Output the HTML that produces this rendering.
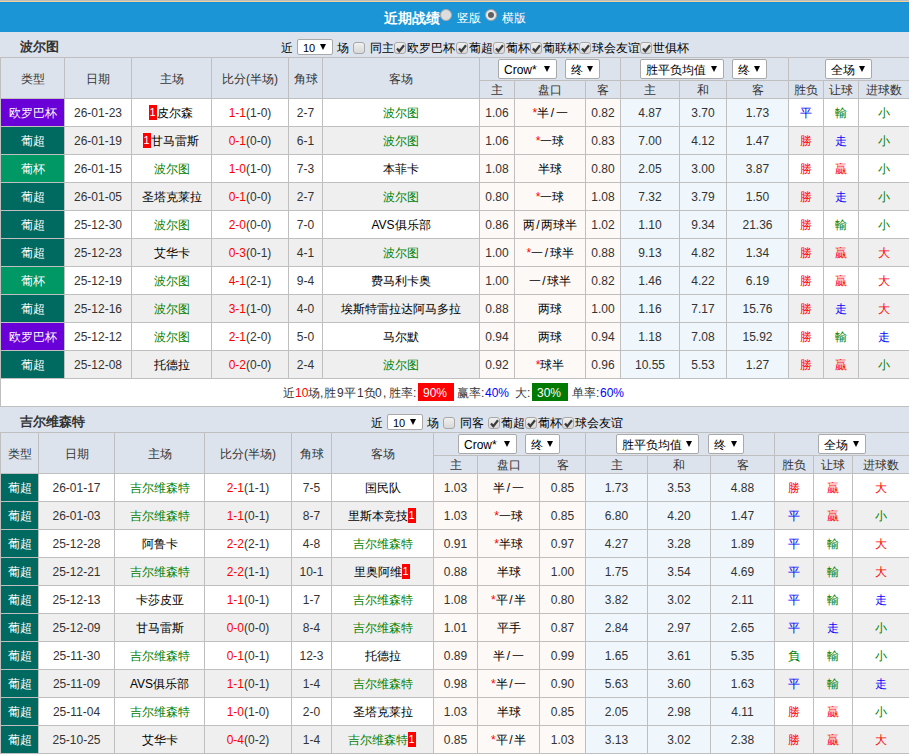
<!DOCTYPE html>
<html><head><meta charset="utf-8"><style>
html,body{margin:0;padding:0;}
body{width:909px;height:755px;overflow:hidden;position:relative;background:#fff;font-family:"Liberation Sans",sans-serif;font-size:12px;color:#333;}
body>div{position:absolute;box-sizing:border-box;white-space:nowrap;}
.t{position:absolute;white-space:nowrap;}
.sl{font-weight:normal;padding:0 1.5px;}
.one{display:inline-block;background:#f00;color:#fff;font-weight:normal;width:8px;height:15px;line-height:15px;text-align:center;font-size:11px;vertical-align:middle;position:relative;top:-1px;}
.box{display:inline-block;color:#fff;padding:0 4px;line-height:18px;}
.sel{background:#fff;border:1px solid #a9a9a9;border-radius:2px;text-align:left;padding:0 0 0 5px;color:#000;}
.arr{position:absolute;right:6px;top:50%;margin-top:-3px;width:0;height:0;border-left:3px solid transparent;border-right:3px solid transparent;border-top:6px solid #000;}
.cb{width:12px;height:12px;border:1px solid #a8a8a8;border-radius:3px;background:linear-gradient(#f0f0f0,#d8d8d8);box-sizing:border-box;}
.cb svg{position:absolute;left:0;top:0;}
.cb span{position:absolute;left:1px;top:-2px;font-size:10px;color:#333;}
.radio{width:12px;height:12px;border-radius:50%;background:#ddd;border:1px solid #aaa;box-sizing:border-box;}
.radio i{position:absolute;left:2px;top:2px;width:6px;height:6px;border-radius:50%;background:#606060;}
.radio.on{background:#e8e8e8;border-color:#a0a0a0;}
</style></head><body>
<div style="left:0px;top:0px;width:909px;height:1px;background:#bdbdc1"></div>
<div style="left:0px;top:1px;width:909px;height:1px;background:#f3d39a"></div>
<div style="left:0px;top:2px;width:909px;height:1px;background:#0e8fd9"></div>
<div style="left:0px;top:3px;width:909px;height:29px;background:#1c95d6"></div>
<div class="t" style="left:384px;top:9px;font-size:14px;font-weight:bold;color:#fff;line-height:18px">近期战绩</div>
<div class="radio" style="left:440px;top:9px"></div>
<div class="t" style="left:457px;top:10px;font-size:12px;color:#fff;line-height:16px">竖版</div>
<div class="radio on" style="left:485px;top:9px"><i></i></div>
<div class="t" style="left:502px;top:10px;font-size:12px;color:#fff;line-height:16px">横版</div>
<div style="left:0px;top:32px;width:909px;height:25px;background:#dde3ec"></div>
<div class="t" style="left:20px;top:38px;font-size:13px;font-weight:bold;color:#333;line-height:18px">波尔图</div>
<div style="left:0px;top:57px;width:909px;height:41px;background:#dde3ec"></div>
<div style="left:1px;top:58px;width:63px;height:40px;line-height:40px;padding-top:1px;text-align:center;color:#333">类型</div>
<div style="left:65px;top:58px;width:66px;height:40px;line-height:40px;padding-top:1px;text-align:center;color:#333">日期</div>
<div style="left:132px;top:58px;width:79px;height:40px;line-height:40px;padding-top:1px;text-align:center;color:#333">主场</div>
<div style="left:212px;top:58px;width:76px;height:40px;line-height:40px;padding-top:1px;text-align:center;color:#333">比分(半场)</div>
<div style="left:289px;top:58px;width:33px;height:40px;line-height:40px;padding-top:1px;text-align:center;color:#333">角球</div>
<div style="left:323px;top:58px;width:156px;height:40px;line-height:40px;padding-top:1px;text-align:center;color:#333">客场</div>
<div style="left:480px;top:81px;width:34px;height:17px;line-height:17px;padding-top:1px;text-align:center;color:#333">主</div>
<div style="left:515px;top:81px;width:70px;height:17px;line-height:17px;padding-top:1px;text-align:center;color:#333">盘口</div>
<div style="left:586px;top:81px;width:34px;height:17px;line-height:17px;padding-top:1px;text-align:center;color:#333">客</div>
<div style="left:621px;top:81px;width:58px;height:17px;line-height:17px;padding-top:1px;text-align:center;color:#333">主</div>
<div style="left:680px;top:81px;width:46px;height:17px;line-height:17px;padding-top:1px;text-align:center;color:#333">和</div>
<div style="left:727px;top:81px;width:61px;height:17px;line-height:17px;padding-top:1px;text-align:center;color:#333">客</div>
<div style="left:789px;top:81px;width:34px;height:17px;line-height:17px;padding-top:1px;text-align:center;color:#333">胜负</div>
<div style="left:824px;top:81px;width:34px;height:17px;line-height:17px;padding-top:1px;text-align:center;color:#333">让球</div>
<div style="left:859px;top:81px;width:50px;height:17px;line-height:17px;padding-top:1px;text-align:center;color:#333">进球数</div>
<div style="left:1px;top:99px;width:908px;height:27px;background:#ffffff"></div>
<div style="left:1px;top:99px;width:63px;height:27px;background:#6a00d8;line-height:27px;padding-top:1px;text-align:center;color:#fff">欧罗巴杯</div>
<div style="left:65px;top:99px;width:66px;height:27px;line-height:27px;padding-top:1px;text-align:center;color:#333">26-01-23</div>
<div style="left:132px;top:99px;width:79px;height:27px;line-height:27px;padding-top:1px;text-align:center;color:#000"><span style="position:relative;left:-1px"><b class="one">1</b>皮尔森</span></div>
<div style="left:212px;top:99px;width:76px;height:27px;line-height:27px;padding-top:1px;text-align:center;color:#333"><span style="color:#ff0000">1-1</span>(1-0)</div>
<div style="left:289px;top:99px;width:33px;height:27px;line-height:27px;padding-top:1px;text-align:center;color:#333">2-7</div>
<div style="left:323px;top:99px;width:156px;height:27px;line-height:27px;padding-top:1px;text-align:center;color:#008000">波尔图</div>
<div style="left:480px;top:99px;width:34px;height:27px;background:#fdf9f6;line-height:27px;padding-top:1px;text-align:center;color:#333">1.06</div>
<div style="left:515px;top:99px;width:70px;height:27px;background:#fdf9f6;line-height:27px;padding-top:1px;text-align:center;color:#000"><span style="color:#ff0000">*</span>半<b class="sl">/</b>一</div>
<div style="left:586px;top:99px;width:34px;height:27px;background:#fdf9f6;line-height:27px;padding-top:1px;text-align:center;color:#333">0.82</div>
<div style="left:621px;top:99px;width:58px;height:27px;background:#eff7fc;line-height:27px;padding-top:1px;text-align:center;color:#333">4.87</div>
<div style="left:680px;top:99px;width:46px;height:27px;background:#eff7fc;line-height:27px;padding-top:1px;text-align:center;color:#333">3.70</div>
<div style="left:727px;top:99px;width:61px;height:27px;background:#eff7fc;line-height:27px;padding-top:1px;text-align:center;color:#333">1.73</div>
<div style="left:789px;top:99px;width:34px;height:27px;line-height:27px;padding-top:1px;text-align:center;color:#0000ff">平</div>
<div style="left:824px;top:99px;width:34px;height:27px;line-height:27px;padding-top:1px;text-align:center;color:#008000">輸</div>
<div style="left:859px;top:99px;width:50px;height:27px;line-height:27px;padding-top:1px;text-align:center;color:#008000">小</div>
<div style="left:1px;top:127px;width:908px;height:27px;background:#efefef"></div>
<div style="left:1px;top:127px;width:63px;height:27px;background:#006a60;line-height:27px;padding-top:1px;text-align:center;color:#fff">葡超</div>
<div style="left:65px;top:127px;width:66px;height:27px;line-height:27px;padding-top:1px;text-align:center;color:#333">26-01-19</div>
<div style="left:132px;top:127px;width:79px;height:27px;line-height:27px;padding-top:1px;text-align:center;color:#000"><span style="position:relative;left:-1px"><b class="one">1</b>甘马雷斯</span></div>
<div style="left:212px;top:127px;width:76px;height:27px;line-height:27px;padding-top:1px;text-align:center;color:#333"><span style="color:#ff0000">0-1</span>(0-0)</div>
<div style="left:289px;top:127px;width:33px;height:27px;line-height:27px;padding-top:1px;text-align:center;color:#333">6-1</div>
<div style="left:323px;top:127px;width:156px;height:27px;line-height:27px;padding-top:1px;text-align:center;color:#008000">波尔图</div>
<div style="left:480px;top:127px;width:34px;height:27px;background:#fdf9f6;line-height:27px;padding-top:1px;text-align:center;color:#333">1.06</div>
<div style="left:515px;top:127px;width:70px;height:27px;background:#fdf9f6;line-height:27px;padding-top:1px;text-align:center;color:#000"><span style="color:#ff0000">*</span>一球</div>
<div style="left:586px;top:127px;width:34px;height:27px;background:#fdf9f6;line-height:27px;padding-top:1px;text-align:center;color:#333">0.83</div>
<div style="left:621px;top:127px;width:58px;height:27px;background:#eff7fc;line-height:27px;padding-top:1px;text-align:center;color:#333">7.00</div>
<div style="left:680px;top:127px;width:46px;height:27px;background:#eff7fc;line-height:27px;padding-top:1px;text-align:center;color:#333">4.12</div>
<div style="left:727px;top:127px;width:61px;height:27px;background:#eff7fc;line-height:27px;padding-top:1px;text-align:center;color:#333">1.47</div>
<div style="left:789px;top:127px;width:34px;height:27px;line-height:27px;padding-top:1px;text-align:center;color:#ff0000">勝</div>
<div style="left:824px;top:127px;width:34px;height:27px;line-height:27px;padding-top:1px;text-align:center;color:#0000ff">走</div>
<div style="left:859px;top:127px;width:50px;height:27px;line-height:27px;padding-top:1px;text-align:center;color:#008000">小</div>
<div style="left:1px;top:155px;width:908px;height:27px;background:#ffffff"></div>
<div style="left:1px;top:155px;width:63px;height:27px;background:#009865;line-height:27px;padding-top:1px;text-align:center;color:#fff">葡杯</div>
<div style="left:65px;top:155px;width:66px;height:27px;line-height:27px;padding-top:1px;text-align:center;color:#333">26-01-15</div>
<div style="left:132px;top:155px;width:79px;height:27px;line-height:27px;padding-top:1px;text-align:center;color:#008000">波尔图</div>
<div style="left:212px;top:155px;width:76px;height:27px;line-height:27px;padding-top:1px;text-align:center;color:#333"><span style="color:#ff0000">1-0</span>(1-0)</div>
<div style="left:289px;top:155px;width:33px;height:27px;line-height:27px;padding-top:1px;text-align:center;color:#333">7-3</div>
<div style="left:323px;top:155px;width:156px;height:27px;line-height:27px;padding-top:1px;text-align:center;color:#000">本菲卡</div>
<div style="left:480px;top:155px;width:34px;height:27px;background:#fdf9f6;line-height:27px;padding-top:1px;text-align:center;color:#333">1.08</div>
<div style="left:515px;top:155px;width:70px;height:27px;background:#fdf9f6;line-height:27px;padding-top:1px;text-align:center;color:#000">半球</div>
<div style="left:586px;top:155px;width:34px;height:27px;background:#fdf9f6;line-height:27px;padding-top:1px;text-align:center;color:#333">0.80</div>
<div style="left:621px;top:155px;width:58px;height:27px;background:#eff7fc;line-height:27px;padding-top:1px;text-align:center;color:#333">2.05</div>
<div style="left:680px;top:155px;width:46px;height:27px;background:#eff7fc;line-height:27px;padding-top:1px;text-align:center;color:#333">3.00</div>
<div style="left:727px;top:155px;width:61px;height:27px;background:#eff7fc;line-height:27px;padding-top:1px;text-align:center;color:#333">3.87</div>
<div style="left:789px;top:155px;width:34px;height:27px;line-height:27px;padding-top:1px;text-align:center;color:#ff0000">勝</div>
<div style="left:824px;top:155px;width:34px;height:27px;line-height:27px;padding-top:1px;text-align:center;color:#ff0000">贏</div>
<div style="left:859px;top:155px;width:50px;height:27px;line-height:27px;padding-top:1px;text-align:center;color:#008000">小</div>
<div style="left:1px;top:183px;width:908px;height:27px;background:#efefef"></div>
<div style="left:1px;top:183px;width:63px;height:27px;background:#006a60;line-height:27px;padding-top:1px;text-align:center;color:#fff">葡超</div>
<div style="left:65px;top:183px;width:66px;height:27px;line-height:27px;padding-top:1px;text-align:center;color:#333">26-01-05</div>
<div style="left:132px;top:183px;width:79px;height:27px;line-height:27px;padding-top:1px;text-align:center;color:#000">圣塔克莱拉</div>
<div style="left:212px;top:183px;width:76px;height:27px;line-height:27px;padding-top:1px;text-align:center;color:#333"><span style="color:#ff0000">0-1</span>(0-0)</div>
<div style="left:289px;top:183px;width:33px;height:27px;line-height:27px;padding-top:1px;text-align:center;color:#333">2-7</div>
<div style="left:323px;top:183px;width:156px;height:27px;line-height:27px;padding-top:1px;text-align:center;color:#008000">波尔图</div>
<div style="left:480px;top:183px;width:34px;height:27px;background:#fdf9f6;line-height:27px;padding-top:1px;text-align:center;color:#333">0.80</div>
<div style="left:515px;top:183px;width:70px;height:27px;background:#fdf9f6;line-height:27px;padding-top:1px;text-align:center;color:#000"><span style="color:#ff0000">*</span>一球</div>
<div style="left:586px;top:183px;width:34px;height:27px;background:#fdf9f6;line-height:27px;padding-top:1px;text-align:center;color:#333">1.08</div>
<div style="left:621px;top:183px;width:58px;height:27px;background:#eff7fc;line-height:27px;padding-top:1px;text-align:center;color:#333">7.32</div>
<div style="left:680px;top:183px;width:46px;height:27px;background:#eff7fc;line-height:27px;padding-top:1px;text-align:center;color:#333">3.79</div>
<div style="left:727px;top:183px;width:61px;height:27px;background:#eff7fc;line-height:27px;padding-top:1px;text-align:center;color:#333">1.50</div>
<div style="left:789px;top:183px;width:34px;height:27px;line-height:27px;padding-top:1px;text-align:center;color:#ff0000">勝</div>
<div style="left:824px;top:183px;width:34px;height:27px;line-height:27px;padding-top:1px;text-align:center;color:#0000ff">走</div>
<div style="left:859px;top:183px;width:50px;height:27px;line-height:27px;padding-top:1px;text-align:center;color:#008000">小</div>
<div style="left:1px;top:211px;width:908px;height:27px;background:#ffffff"></div>
<div style="left:1px;top:211px;width:63px;height:27px;background:#006a60;line-height:27px;padding-top:1px;text-align:center;color:#fff">葡超</div>
<div style="left:65px;top:211px;width:66px;height:27px;line-height:27px;padding-top:1px;text-align:center;color:#333">25-12-30</div>
<div style="left:132px;top:211px;width:79px;height:27px;line-height:27px;padding-top:1px;text-align:center;color:#008000">波尔图</div>
<div style="left:212px;top:211px;width:76px;height:27px;line-height:27px;padding-top:1px;text-align:center;color:#333"><span style="color:#ff0000">2-0</span>(0-0)</div>
<div style="left:289px;top:211px;width:33px;height:27px;line-height:27px;padding-top:1px;text-align:center;color:#333">7-0</div>
<div style="left:323px;top:211px;width:156px;height:27px;line-height:27px;padding-top:1px;text-align:center;color:#000">AVS俱乐部</div>
<div style="left:480px;top:211px;width:34px;height:27px;background:#fdf9f6;line-height:27px;padding-top:1px;text-align:center;color:#333">0.86</div>
<div style="left:515px;top:211px;width:70px;height:27px;background:#fdf9f6;line-height:27px;padding-top:1px;text-align:center;color:#000">两<b class="sl">/</b>两球半</div>
<div style="left:586px;top:211px;width:34px;height:27px;background:#fdf9f6;line-height:27px;padding-top:1px;text-align:center;color:#333">1.02</div>
<div style="left:621px;top:211px;width:58px;height:27px;background:#eff7fc;line-height:27px;padding-top:1px;text-align:center;color:#333">1.10</div>
<div style="left:680px;top:211px;width:46px;height:27px;background:#eff7fc;line-height:27px;padding-top:1px;text-align:center;color:#333">9.34</div>
<div style="left:727px;top:211px;width:61px;height:27px;background:#eff7fc;line-height:27px;padding-top:1px;text-align:center;color:#333">21.36</div>
<div style="left:789px;top:211px;width:34px;height:27px;line-height:27px;padding-top:1px;text-align:center;color:#ff0000">勝</div>
<div style="left:824px;top:211px;width:34px;height:27px;line-height:27px;padding-top:1px;text-align:center;color:#008000">輸</div>
<div style="left:859px;top:211px;width:50px;height:27px;line-height:27px;padding-top:1px;text-align:center;color:#008000">小</div>
<div style="left:1px;top:239px;width:908px;height:27px;background:#efefef"></div>
<div style="left:1px;top:239px;width:63px;height:27px;background:#006a60;line-height:27px;padding-top:1px;text-align:center;color:#fff">葡超</div>
<div style="left:65px;top:239px;width:66px;height:27px;line-height:27px;padding-top:1px;text-align:center;color:#333">25-12-23</div>
<div style="left:132px;top:239px;width:79px;height:27px;line-height:27px;padding-top:1px;text-align:center;color:#000">艾华卡</div>
<div style="left:212px;top:239px;width:76px;height:27px;line-height:27px;padding-top:1px;text-align:center;color:#333"><span style="color:#ff0000">0-3</span>(0-1)</div>
<div style="left:289px;top:239px;width:33px;height:27px;line-height:27px;padding-top:1px;text-align:center;color:#333">4-1</div>
<div style="left:323px;top:239px;width:156px;height:27px;line-height:27px;padding-top:1px;text-align:center;color:#008000">波尔图</div>
<div style="left:480px;top:239px;width:34px;height:27px;background:#fdf9f6;line-height:27px;padding-top:1px;text-align:center;color:#333">1.00</div>
<div style="left:515px;top:239px;width:70px;height:27px;background:#fdf9f6;line-height:27px;padding-top:1px;text-align:center;color:#000"><span style="color:#ff0000">*</span>一<b class="sl">/</b>球半</div>
<div style="left:586px;top:239px;width:34px;height:27px;background:#fdf9f6;line-height:27px;padding-top:1px;text-align:center;color:#333">0.88</div>
<div style="left:621px;top:239px;width:58px;height:27px;background:#eff7fc;line-height:27px;padding-top:1px;text-align:center;color:#333">9.13</div>
<div style="left:680px;top:239px;width:46px;height:27px;background:#eff7fc;line-height:27px;padding-top:1px;text-align:center;color:#333">4.82</div>
<div style="left:727px;top:239px;width:61px;height:27px;background:#eff7fc;line-height:27px;padding-top:1px;text-align:center;color:#333">1.34</div>
<div style="left:789px;top:239px;width:34px;height:27px;line-height:27px;padding-top:1px;text-align:center;color:#ff0000">勝</div>
<div style="left:824px;top:239px;width:34px;height:27px;line-height:27px;padding-top:1px;text-align:center;color:#ff0000">贏</div>
<div style="left:859px;top:239px;width:50px;height:27px;line-height:27px;padding-top:1px;text-align:center;color:#ff0000">大</div>
<div style="left:1px;top:267px;width:908px;height:27px;background:#ffffff"></div>
<div style="left:1px;top:267px;width:63px;height:27px;background:#009865;line-height:27px;padding-top:1px;text-align:center;color:#fff">葡杯</div>
<div style="left:65px;top:267px;width:66px;height:27px;line-height:27px;padding-top:1px;text-align:center;color:#333">25-12-19</div>
<div style="left:132px;top:267px;width:79px;height:27px;line-height:27px;padding-top:1px;text-align:center;color:#008000">波尔图</div>
<div style="left:212px;top:267px;width:76px;height:27px;line-height:27px;padding-top:1px;text-align:center;color:#333"><span style="color:#ff0000">4-1</span>(2-1)</div>
<div style="left:289px;top:267px;width:33px;height:27px;line-height:27px;padding-top:1px;text-align:center;color:#333">9-4</div>
<div style="left:323px;top:267px;width:156px;height:27px;line-height:27px;padding-top:1px;text-align:center;color:#000">费马利卡奥</div>
<div style="left:480px;top:267px;width:34px;height:27px;background:#fdf9f6;line-height:27px;padding-top:1px;text-align:center;color:#333">1.00</div>
<div style="left:515px;top:267px;width:70px;height:27px;background:#fdf9f6;line-height:27px;padding-top:1px;text-align:center;color:#000">一<b class="sl">/</b>球半</div>
<div style="left:586px;top:267px;width:34px;height:27px;background:#fdf9f6;line-height:27px;padding-top:1px;text-align:center;color:#333">0.82</div>
<div style="left:621px;top:267px;width:58px;height:27px;background:#eff7fc;line-height:27px;padding-top:1px;text-align:center;color:#333">1.46</div>
<div style="left:680px;top:267px;width:46px;height:27px;background:#eff7fc;line-height:27px;padding-top:1px;text-align:center;color:#333">4.22</div>
<div style="left:727px;top:267px;width:61px;height:27px;background:#eff7fc;line-height:27px;padding-top:1px;text-align:center;color:#333">6.19</div>
<div style="left:789px;top:267px;width:34px;height:27px;line-height:27px;padding-top:1px;text-align:center;color:#ff0000">勝</div>
<div style="left:824px;top:267px;width:34px;height:27px;line-height:27px;padding-top:1px;text-align:center;color:#ff0000">贏</div>
<div style="left:859px;top:267px;width:50px;height:27px;line-height:27px;padding-top:1px;text-align:center;color:#ff0000">大</div>
<div style="left:1px;top:295px;width:908px;height:27px;background:#efefef"></div>
<div style="left:1px;top:295px;width:63px;height:27px;background:#006a60;line-height:27px;padding-top:1px;text-align:center;color:#fff">葡超</div>
<div style="left:65px;top:295px;width:66px;height:27px;line-height:27px;padding-top:1px;text-align:center;color:#333">25-12-16</div>
<div style="left:132px;top:295px;width:79px;height:27px;line-height:27px;padding-top:1px;text-align:center;color:#008000">波尔图</div>
<div style="left:212px;top:295px;width:76px;height:27px;line-height:27px;padding-top:1px;text-align:center;color:#333"><span style="color:#ff0000">3-1</span>(1-0)</div>
<div style="left:289px;top:295px;width:33px;height:27px;line-height:27px;padding-top:1px;text-align:center;color:#333">4-0</div>
<div style="left:323px;top:295px;width:156px;height:27px;line-height:27px;padding-top:1px;text-align:center;color:#000">埃斯特雷拉达阿马多拉</div>
<div style="left:480px;top:295px;width:34px;height:27px;background:#fdf9f6;line-height:27px;padding-top:1px;text-align:center;color:#333">0.88</div>
<div style="left:515px;top:295px;width:70px;height:27px;background:#fdf9f6;line-height:27px;padding-top:1px;text-align:center;color:#000">两球</div>
<div style="left:586px;top:295px;width:34px;height:27px;background:#fdf9f6;line-height:27px;padding-top:1px;text-align:center;color:#333">1.00</div>
<div style="left:621px;top:295px;width:58px;height:27px;background:#eff7fc;line-height:27px;padding-top:1px;text-align:center;color:#333">1.16</div>
<div style="left:680px;top:295px;width:46px;height:27px;background:#eff7fc;line-height:27px;padding-top:1px;text-align:center;color:#333">7.17</div>
<div style="left:727px;top:295px;width:61px;height:27px;background:#eff7fc;line-height:27px;padding-top:1px;text-align:center;color:#333">15.76</div>
<div style="left:789px;top:295px;width:34px;height:27px;line-height:27px;padding-top:1px;text-align:center;color:#ff0000">勝</div>
<div style="left:824px;top:295px;width:34px;height:27px;line-height:27px;padding-top:1px;text-align:center;color:#0000ff">走</div>
<div style="left:859px;top:295px;width:50px;height:27px;line-height:27px;padding-top:1px;text-align:center;color:#ff0000">大</div>
<div style="left:1px;top:323px;width:908px;height:27px;background:#ffffff"></div>
<div style="left:1px;top:323px;width:63px;height:27px;background:#6a00d8;line-height:27px;padding-top:1px;text-align:center;color:#fff">欧罗巴杯</div>
<div style="left:65px;top:323px;width:66px;height:27px;line-height:27px;padding-top:1px;text-align:center;color:#333">25-12-12</div>
<div style="left:132px;top:323px;width:79px;height:27px;line-height:27px;padding-top:1px;text-align:center;color:#008000">波尔图</div>
<div style="left:212px;top:323px;width:76px;height:27px;line-height:27px;padding-top:1px;text-align:center;color:#333"><span style="color:#ff0000">2-1</span>(2-0)</div>
<div style="left:289px;top:323px;width:33px;height:27px;line-height:27px;padding-top:1px;text-align:center;color:#333">5-0</div>
<div style="left:323px;top:323px;width:156px;height:27px;line-height:27px;padding-top:1px;text-align:center;color:#000">马尔默</div>
<div style="left:480px;top:323px;width:34px;height:27px;background:#fdf9f6;line-height:27px;padding-top:1px;text-align:center;color:#333">0.94</div>
<div style="left:515px;top:323px;width:70px;height:27px;background:#fdf9f6;line-height:27px;padding-top:1px;text-align:center;color:#000">两球</div>
<div style="left:586px;top:323px;width:34px;height:27px;background:#fdf9f6;line-height:27px;padding-top:1px;text-align:center;color:#333">0.94</div>
<div style="left:621px;top:323px;width:58px;height:27px;background:#eff7fc;line-height:27px;padding-top:1px;text-align:center;color:#333">1.18</div>
<div style="left:680px;top:323px;width:46px;height:27px;background:#eff7fc;line-height:27px;padding-top:1px;text-align:center;color:#333">7.08</div>
<div style="left:727px;top:323px;width:61px;height:27px;background:#eff7fc;line-height:27px;padding-top:1px;text-align:center;color:#333">15.92</div>
<div style="left:789px;top:323px;width:34px;height:27px;line-height:27px;padding-top:1px;text-align:center;color:#ff0000">勝</div>
<div style="left:824px;top:323px;width:34px;height:27px;line-height:27px;padding-top:1px;text-align:center;color:#008000">輸</div>
<div style="left:859px;top:323px;width:50px;height:27px;line-height:27px;padding-top:1px;text-align:center;color:#0000ff">走</div>
<div style="left:1px;top:351px;width:908px;height:27px;background:#efefef"></div>
<div style="left:1px;top:351px;width:63px;height:27px;background:#006a60;line-height:27px;padding-top:1px;text-align:center;color:#fff">葡超</div>
<div style="left:65px;top:351px;width:66px;height:27px;line-height:27px;padding-top:1px;text-align:center;color:#333">25-12-08</div>
<div style="left:132px;top:351px;width:79px;height:27px;line-height:27px;padding-top:1px;text-align:center;color:#000">托德拉</div>
<div style="left:212px;top:351px;width:76px;height:27px;line-height:27px;padding-top:1px;text-align:center;color:#333"><span style="color:#ff0000">0-2</span>(0-0)</div>
<div style="left:289px;top:351px;width:33px;height:27px;line-height:27px;padding-top:1px;text-align:center;color:#333">2-4</div>
<div style="left:323px;top:351px;width:156px;height:27px;line-height:27px;padding-top:1px;text-align:center;color:#008000">波尔图</div>
<div style="left:480px;top:351px;width:34px;height:27px;background:#fdf9f6;line-height:27px;padding-top:1px;text-align:center;color:#333">0.92</div>
<div style="left:515px;top:351px;width:70px;height:27px;background:#fdf9f6;line-height:27px;padding-top:1px;text-align:center;color:#000"><span style="color:#ff0000">*</span>球半</div>
<div style="left:586px;top:351px;width:34px;height:27px;background:#fdf9f6;line-height:27px;padding-top:1px;text-align:center;color:#333">0.96</div>
<div style="left:621px;top:351px;width:58px;height:27px;background:#eff7fc;line-height:27px;padding-top:1px;text-align:center;color:#333">10.55</div>
<div style="left:680px;top:351px;width:46px;height:27px;background:#eff7fc;line-height:27px;padding-top:1px;text-align:center;color:#333">5.53</div>
<div style="left:727px;top:351px;width:61px;height:27px;background:#eff7fc;line-height:27px;padding-top:1px;text-align:center;color:#333">1.27</div>
<div style="left:789px;top:351px;width:34px;height:27px;line-height:27px;padding-top:1px;text-align:center;color:#ff0000">勝</div>
<div style="left:824px;top:351px;width:34px;height:27px;line-height:27px;padding-top:1px;text-align:center;color:#ff0000">贏</div>
<div style="left:859px;top:351px;width:50px;height:27px;line-height:27px;padding-top:1px;text-align:center;color:#008000">小</div>
<div style="left:0px;top:57px;width:909px;height:1px;background:#bfbfbf"></div>
<div style="left:479px;top:80px;width:430px;height:1px;background:#bfbfbf"></div>
<div style="left:0px;top:98px;width:909px;height:1px;background:#bfbfbf"></div>
<div style="left:0px;top:126px;width:909px;height:1px;background:#bfbfbf"></div>
<div style="left:0px;top:154px;width:909px;height:1px;background:#bfbfbf"></div>
<div style="left:0px;top:182px;width:909px;height:1px;background:#bfbfbf"></div>
<div style="left:0px;top:210px;width:909px;height:1px;background:#bfbfbf"></div>
<div style="left:0px;top:238px;width:909px;height:1px;background:#bfbfbf"></div>
<div style="left:0px;top:266px;width:909px;height:1px;background:#bfbfbf"></div>
<div style="left:0px;top:294px;width:909px;height:1px;background:#bfbfbf"></div>
<div style="left:0px;top:322px;width:909px;height:1px;background:#bfbfbf"></div>
<div style="left:0px;top:350px;width:909px;height:1px;background:#bfbfbf"></div>
<div style="left:0px;top:378px;width:909px;height:1px;background:#bfbfbf"></div>
<div style="left:0px;top:57px;width:1px;height:321px;background:#bfbfbf"></div>
<div style="left:64px;top:57px;width:1px;height:321px;background:#bfbfbf"></div>
<div style="left:131px;top:57px;width:1px;height:321px;background:#bfbfbf"></div>
<div style="left:211px;top:57px;width:1px;height:321px;background:#bfbfbf"></div>
<div style="left:288px;top:57px;width:1px;height:321px;background:#bfbfbf"></div>
<div style="left:322px;top:57px;width:1px;height:321px;background:#bfbfbf"></div>
<div style="left:479px;top:57px;width:1px;height:321px;background:#bfbfbf"></div>
<div style="left:514px;top:80px;width:1px;height:298px;background:#bfbfbf"></div>
<div style="left:585px;top:80px;width:1px;height:298px;background:#bfbfbf"></div>
<div style="left:620px;top:57px;width:1px;height:321px;background:#bfbfbf"></div>
<div style="left:679px;top:80px;width:1px;height:298px;background:#bfbfbf"></div>
<div style="left:726px;top:80px;width:1px;height:298px;background:#bfbfbf"></div>
<div style="left:788px;top:57px;width:1px;height:321px;background:#bfbfbf"></div>
<div style="left:823px;top:80px;width:1px;height:298px;background:#bfbfbf"></div>
<div style="left:858px;top:80px;width:1px;height:298px;background:#bfbfbf"></div>
<div style="left:1px;top:379px;width:908px;height:27px;background:#fff"></div>
<div style="left:0px;top:406px;width:909px;height:1px;background:#bfbfbf"></div>
<div style="left:0px;top:378px;width:1px;height:28px;background:#bfbfbf"></div>
<div class="t" style="left:283px;top:386px;line-height:14px;color:#333">近</div>
<div class="t" style="left:295px;top:386px;line-height:14px;color:#ff0000">10</div>
<div class="t" style="left:308px;top:386px;line-height:14px;color:#333">场</div>
<div class="t" style="left:320px;top:386px;line-height:14px;color:#333">,</div>
<div class="t" style="left:324px;top:386px;line-height:14px;color:#333">胜</div>
<div class="t" style="left:337px;top:386px;line-height:14px;color:#333">9</div>
<div class="t" style="left:344px;top:386px;line-height:14px;color:#333">平</div>
<div class="t" style="left:357px;top:386px;line-height:14px;color:#333">1</div>
<div class="t" style="left:364px;top:386px;line-height:14px;color:#333">负</div>
<div class="t" style="left:375px;top:386px;line-height:14px;color:#333">0</div>
<div class="t" style="left:383px;top:386px;line-height:14px;color:#333">,</div>
<div class="t" style="left:389px;top:386px;line-height:14px;color:#333">胜率:</div>
<div style="left:418px;top:383px;width:36px;height:18px;background:#ff0000"></div>
<div class="t" style="left:423px;top:386px;line-height:14px;color:#fff">90%</div>
<div class="t" style="left:457px;top:386px;line-height:14px;color:#333">赢率:</div>
<div class="t" style="left:485px;top:386px;line-height:14px;color:#0000ff">40%</div>
<div class="t" style="left:515px;top:386px;line-height:14px;color:#333">大:</div>
<div style="left:532px;top:383px;width:36px;height:18px;background:#007a00"></div>
<div class="t" style="left:537px;top:386px;line-height:14px;color:#fff">30%</div>
<div class="t" style="left:572px;top:386px;line-height:14px;color:#333">单率:</div>
<div class="t" style="left:600px;top:386px;line-height:14px;color:#0000ff">60%</div>
<div style="left:0px;top:407px;width:909px;height:25px;background:#dde3ec"></div>
<div class="t" style="left:20px;top:413px;font-size:13px;font-weight:bold;color:#333;line-height:18px">吉尔维森特</div>
<div style="left:0px;top:432px;width:909px;height:41px;background:#dde3ec"></div>
<div style="left:1px;top:433px;width:37px;height:40px;line-height:40px;padding-top:1px;text-align:center;color:#333">类型</div>
<div style="left:39px;top:433px;width:75px;height:40px;line-height:40px;padding-top:1px;text-align:center;color:#333">日期</div>
<div style="left:115px;top:433px;width:89px;height:40px;line-height:40px;padding-top:1px;text-align:center;color:#333">主场</div>
<div style="left:205px;top:433px;width:86px;height:40px;line-height:40px;padding-top:1px;text-align:center;color:#333">比分(半场)</div>
<div style="left:292px;top:433px;width:39px;height:40px;line-height:40px;padding-top:1px;text-align:center;color:#333">角球</div>
<div style="left:332px;top:433px;width:101px;height:40px;line-height:40px;padding-top:1px;text-align:center;color:#333">客场</div>
<div style="left:434px;top:456px;width:43px;height:17px;line-height:17px;padding-top:1px;text-align:center;color:#333">主</div>
<div style="left:478px;top:456px;width:61px;height:17px;line-height:17px;padding-top:1px;text-align:center;color:#333">盘口</div>
<div style="left:540px;top:456px;width:45px;height:17px;line-height:17px;padding-top:1px;text-align:center;color:#333">客</div>
<div style="left:586px;top:456px;width:61px;height:17px;line-height:17px;padding-top:1px;text-align:center;color:#333">主</div>
<div style="left:648px;top:456px;width:62px;height:17px;line-height:17px;padding-top:1px;text-align:center;color:#333">和</div>
<div style="left:711px;top:456px;width:63px;height:17px;line-height:17px;padding-top:1px;text-align:center;color:#333">客</div>
<div style="left:775px;top:456px;width:38px;height:17px;line-height:17px;padding-top:1px;text-align:center;color:#333">胜负</div>
<div style="left:814px;top:456px;width:38px;height:17px;line-height:17px;padding-top:1px;text-align:center;color:#333">让球</div>
<div style="left:853px;top:456px;width:56px;height:17px;line-height:17px;padding-top:1px;text-align:center;color:#333">进球数</div>
<div style="left:1px;top:474px;width:908px;height:27px;background:#ffffff"></div>
<div style="left:1px;top:474px;width:37px;height:27px;background:#006a60;line-height:27px;padding-top:1px;text-align:center;color:#fff">葡超</div>
<div style="left:39px;top:474px;width:75px;height:27px;line-height:27px;padding-top:1px;text-align:center;color:#333">26-01-17</div>
<div style="left:115px;top:474px;width:89px;height:27px;line-height:27px;padding-top:1px;text-align:center;color:#008000">吉尔维森特</div>
<div style="left:205px;top:474px;width:86px;height:27px;line-height:27px;padding-top:1px;text-align:center;color:#333"><span style="color:#ff0000">2-1</span>(1-1)</div>
<div style="left:292px;top:474px;width:39px;height:27px;line-height:27px;padding-top:1px;text-align:center;color:#333">7-5</div>
<div style="left:332px;top:474px;width:101px;height:27px;line-height:27px;padding-top:1px;text-align:center;color:#000">国民队</div>
<div style="left:434px;top:474px;width:43px;height:27px;background:#fdf9f6;line-height:27px;padding-top:1px;text-align:center;color:#333">1.03</div>
<div style="left:478px;top:474px;width:61px;height:27px;background:#fdf9f6;line-height:27px;padding-top:1px;text-align:center;color:#000">半<b class="sl">/</b>一</div>
<div style="left:540px;top:474px;width:45px;height:27px;background:#fdf9f6;line-height:27px;padding-top:1px;text-align:center;color:#333">0.85</div>
<div style="left:586px;top:474px;width:61px;height:27px;background:#eff7fc;line-height:27px;padding-top:1px;text-align:center;color:#333">1.73</div>
<div style="left:648px;top:474px;width:62px;height:27px;background:#eff7fc;line-height:27px;padding-top:1px;text-align:center;color:#333">3.53</div>
<div style="left:711px;top:474px;width:63px;height:27px;background:#eff7fc;line-height:27px;padding-top:1px;text-align:center;color:#333">4.88</div>
<div style="left:775px;top:474px;width:38px;height:27px;line-height:27px;padding-top:1px;text-align:center;color:#ff0000">勝</div>
<div style="left:814px;top:474px;width:38px;height:27px;line-height:27px;padding-top:1px;text-align:center;color:#ff0000">贏</div>
<div style="left:853px;top:474px;width:56px;height:27px;line-height:27px;padding-top:1px;text-align:center;color:#ff0000">大</div>
<div style="left:1px;top:502px;width:908px;height:27px;background:#efefef"></div>
<div style="left:1px;top:502px;width:37px;height:27px;background:#006a60;line-height:27px;padding-top:1px;text-align:center;color:#fff">葡超</div>
<div style="left:39px;top:502px;width:75px;height:27px;line-height:27px;padding-top:1px;text-align:center;color:#333">26-01-03</div>
<div style="left:115px;top:502px;width:89px;height:27px;line-height:27px;padding-top:1px;text-align:center;color:#008000">吉尔维森特</div>
<div style="left:205px;top:502px;width:86px;height:27px;line-height:27px;padding-top:1px;text-align:center;color:#333"><span style="color:#ff0000">1-1</span>(0-1)</div>
<div style="left:292px;top:502px;width:39px;height:27px;line-height:27px;padding-top:1px;text-align:center;color:#333">8-7</div>
<div style="left:332px;top:502px;width:101px;height:27px;line-height:27px;padding-top:1px;text-align:center;color:#000"><span style="position:relative;left:-1px">里斯本竞技<b class="one">1</b></span></div>
<div style="left:434px;top:502px;width:43px;height:27px;background:#fdf9f6;line-height:27px;padding-top:1px;text-align:center;color:#333">1.03</div>
<div style="left:478px;top:502px;width:61px;height:27px;background:#fdf9f6;line-height:27px;padding-top:1px;text-align:center;color:#000"><span style="color:#ff0000">*</span>一球</div>
<div style="left:540px;top:502px;width:45px;height:27px;background:#fdf9f6;line-height:27px;padding-top:1px;text-align:center;color:#333">0.85</div>
<div style="left:586px;top:502px;width:61px;height:27px;background:#eff7fc;line-height:27px;padding-top:1px;text-align:center;color:#333">6.80</div>
<div style="left:648px;top:502px;width:62px;height:27px;background:#eff7fc;line-height:27px;padding-top:1px;text-align:center;color:#333">4.20</div>
<div style="left:711px;top:502px;width:63px;height:27px;background:#eff7fc;line-height:27px;padding-top:1px;text-align:center;color:#333">1.47</div>
<div style="left:775px;top:502px;width:38px;height:27px;line-height:27px;padding-top:1px;text-align:center;color:#0000ff">平</div>
<div style="left:814px;top:502px;width:38px;height:27px;line-height:27px;padding-top:1px;text-align:center;color:#ff0000">贏</div>
<div style="left:853px;top:502px;width:56px;height:27px;line-height:27px;padding-top:1px;text-align:center;color:#008000">小</div>
<div style="left:1px;top:530px;width:908px;height:27px;background:#ffffff"></div>
<div style="left:1px;top:530px;width:37px;height:27px;background:#006a60;line-height:27px;padding-top:1px;text-align:center;color:#fff">葡超</div>
<div style="left:39px;top:530px;width:75px;height:27px;line-height:27px;padding-top:1px;text-align:center;color:#333">25-12-28</div>
<div style="left:115px;top:530px;width:89px;height:27px;line-height:27px;padding-top:1px;text-align:center;color:#000">阿鲁卡</div>
<div style="left:205px;top:530px;width:86px;height:27px;line-height:27px;padding-top:1px;text-align:center;color:#333"><span style="color:#ff0000">2-2</span>(2-1)</div>
<div style="left:292px;top:530px;width:39px;height:27px;line-height:27px;padding-top:1px;text-align:center;color:#333">4-8</div>
<div style="left:332px;top:530px;width:101px;height:27px;line-height:27px;padding-top:1px;text-align:center;color:#008000">吉尔维森特</div>
<div style="left:434px;top:530px;width:43px;height:27px;background:#fdf9f6;line-height:27px;padding-top:1px;text-align:center;color:#333">0.91</div>
<div style="left:478px;top:530px;width:61px;height:27px;background:#fdf9f6;line-height:27px;padding-top:1px;text-align:center;color:#000"><span style="color:#ff0000">*</span>半球</div>
<div style="left:540px;top:530px;width:45px;height:27px;background:#fdf9f6;line-height:27px;padding-top:1px;text-align:center;color:#333">0.97</div>
<div style="left:586px;top:530px;width:61px;height:27px;background:#eff7fc;line-height:27px;padding-top:1px;text-align:center;color:#333">4.27</div>
<div style="left:648px;top:530px;width:62px;height:27px;background:#eff7fc;line-height:27px;padding-top:1px;text-align:center;color:#333">3.28</div>
<div style="left:711px;top:530px;width:63px;height:27px;background:#eff7fc;line-height:27px;padding-top:1px;text-align:center;color:#333">1.89</div>
<div style="left:775px;top:530px;width:38px;height:27px;line-height:27px;padding-top:1px;text-align:center;color:#0000ff">平</div>
<div style="left:814px;top:530px;width:38px;height:27px;line-height:27px;padding-top:1px;text-align:center;color:#008000">輸</div>
<div style="left:853px;top:530px;width:56px;height:27px;line-height:27px;padding-top:1px;text-align:center;color:#ff0000">大</div>
<div style="left:1px;top:558px;width:908px;height:27px;background:#efefef"></div>
<div style="left:1px;top:558px;width:37px;height:27px;background:#006a60;line-height:27px;padding-top:1px;text-align:center;color:#fff">葡超</div>
<div style="left:39px;top:558px;width:75px;height:27px;line-height:27px;padding-top:1px;text-align:center;color:#333">25-12-21</div>
<div style="left:115px;top:558px;width:89px;height:27px;line-height:27px;padding-top:1px;text-align:center;color:#008000">吉尔维森特</div>
<div style="left:205px;top:558px;width:86px;height:27px;line-height:27px;padding-top:1px;text-align:center;color:#333"><span style="color:#ff0000">2-2</span>(1-1)</div>
<div style="left:292px;top:558px;width:39px;height:27px;line-height:27px;padding-top:1px;text-align:center;color:#333">10-1</div>
<div style="left:332px;top:558px;width:101px;height:27px;line-height:27px;padding-top:1px;text-align:center;color:#000"><span style="position:relative;left:-1px">里奥阿维<b class="one">1</b></span></div>
<div style="left:434px;top:558px;width:43px;height:27px;background:#fdf9f6;line-height:27px;padding-top:1px;text-align:center;color:#333">0.88</div>
<div style="left:478px;top:558px;width:61px;height:27px;background:#fdf9f6;line-height:27px;padding-top:1px;text-align:center;color:#000">半球</div>
<div style="left:540px;top:558px;width:45px;height:27px;background:#fdf9f6;line-height:27px;padding-top:1px;text-align:center;color:#333">1.00</div>
<div style="left:586px;top:558px;width:61px;height:27px;background:#eff7fc;line-height:27px;padding-top:1px;text-align:center;color:#333">1.75</div>
<div style="left:648px;top:558px;width:62px;height:27px;background:#eff7fc;line-height:27px;padding-top:1px;text-align:center;color:#333">3.54</div>
<div style="left:711px;top:558px;width:63px;height:27px;background:#eff7fc;line-height:27px;padding-top:1px;text-align:center;color:#333">4.69</div>
<div style="left:775px;top:558px;width:38px;height:27px;line-height:27px;padding-top:1px;text-align:center;color:#0000ff">平</div>
<div style="left:814px;top:558px;width:38px;height:27px;line-height:27px;padding-top:1px;text-align:center;color:#008000">輸</div>
<div style="left:853px;top:558px;width:56px;height:27px;line-height:27px;padding-top:1px;text-align:center;color:#ff0000">大</div>
<div style="left:1px;top:586px;width:908px;height:27px;background:#ffffff"></div>
<div style="left:1px;top:586px;width:37px;height:27px;background:#006a60;line-height:27px;padding-top:1px;text-align:center;color:#fff">葡超</div>
<div style="left:39px;top:586px;width:75px;height:27px;line-height:27px;padding-top:1px;text-align:center;color:#333">25-12-13</div>
<div style="left:115px;top:586px;width:89px;height:27px;line-height:27px;padding-top:1px;text-align:center;color:#000">卡莎皮亚</div>
<div style="left:205px;top:586px;width:86px;height:27px;line-height:27px;padding-top:1px;text-align:center;color:#333"><span style="color:#ff0000">1-1</span>(0-1)</div>
<div style="left:292px;top:586px;width:39px;height:27px;line-height:27px;padding-top:1px;text-align:center;color:#333">1-7</div>
<div style="left:332px;top:586px;width:101px;height:27px;line-height:27px;padding-top:1px;text-align:center;color:#008000">吉尔维森特</div>
<div style="left:434px;top:586px;width:43px;height:27px;background:#fdf9f6;line-height:27px;padding-top:1px;text-align:center;color:#333">1.08</div>
<div style="left:478px;top:586px;width:61px;height:27px;background:#fdf9f6;line-height:27px;padding-top:1px;text-align:center;color:#000"><span style="color:#ff0000">*</span>平<b class="sl">/</b>半</div>
<div style="left:540px;top:586px;width:45px;height:27px;background:#fdf9f6;line-height:27px;padding-top:1px;text-align:center;color:#333">0.80</div>
<div style="left:586px;top:586px;width:61px;height:27px;background:#eff7fc;line-height:27px;padding-top:1px;text-align:center;color:#333">3.82</div>
<div style="left:648px;top:586px;width:62px;height:27px;background:#eff7fc;line-height:27px;padding-top:1px;text-align:center;color:#333">3.02</div>
<div style="left:711px;top:586px;width:63px;height:27px;background:#eff7fc;line-height:27px;padding-top:1px;text-align:center;color:#333">2.11</div>
<div style="left:775px;top:586px;width:38px;height:27px;line-height:27px;padding-top:1px;text-align:center;color:#0000ff">平</div>
<div style="left:814px;top:586px;width:38px;height:27px;line-height:27px;padding-top:1px;text-align:center;color:#008000">輸</div>
<div style="left:853px;top:586px;width:56px;height:27px;line-height:27px;padding-top:1px;text-align:center;color:#0000ff">走</div>
<div style="left:1px;top:614px;width:908px;height:27px;background:#efefef"></div>
<div style="left:1px;top:614px;width:37px;height:27px;background:#006a60;line-height:27px;padding-top:1px;text-align:center;color:#fff">葡超</div>
<div style="left:39px;top:614px;width:75px;height:27px;line-height:27px;padding-top:1px;text-align:center;color:#333">25-12-09</div>
<div style="left:115px;top:614px;width:89px;height:27px;line-height:27px;padding-top:1px;text-align:center;color:#000">甘马雷斯</div>
<div style="left:205px;top:614px;width:86px;height:27px;line-height:27px;padding-top:1px;text-align:center;color:#333"><span style="color:#ff0000">0-0</span>(0-0)</div>
<div style="left:292px;top:614px;width:39px;height:27px;line-height:27px;padding-top:1px;text-align:center;color:#333">8-4</div>
<div style="left:332px;top:614px;width:101px;height:27px;line-height:27px;padding-top:1px;text-align:center;color:#008000">吉尔维森特</div>
<div style="left:434px;top:614px;width:43px;height:27px;background:#fdf9f6;line-height:27px;padding-top:1px;text-align:center;color:#333">1.01</div>
<div style="left:478px;top:614px;width:61px;height:27px;background:#fdf9f6;line-height:27px;padding-top:1px;text-align:center;color:#000">平手</div>
<div style="left:540px;top:614px;width:45px;height:27px;background:#fdf9f6;line-height:27px;padding-top:1px;text-align:center;color:#333">0.87</div>
<div style="left:586px;top:614px;width:61px;height:27px;background:#eff7fc;line-height:27px;padding-top:1px;text-align:center;color:#333">2.84</div>
<div style="left:648px;top:614px;width:62px;height:27px;background:#eff7fc;line-height:27px;padding-top:1px;text-align:center;color:#333">2.97</div>
<div style="left:711px;top:614px;width:63px;height:27px;background:#eff7fc;line-height:27px;padding-top:1px;text-align:center;color:#333">2.65</div>
<div style="left:775px;top:614px;width:38px;height:27px;line-height:27px;padding-top:1px;text-align:center;color:#0000ff">平</div>
<div style="left:814px;top:614px;width:38px;height:27px;line-height:27px;padding-top:1px;text-align:center;color:#0000ff">走</div>
<div style="left:853px;top:614px;width:56px;height:27px;line-height:27px;padding-top:1px;text-align:center;color:#008000">小</div>
<div style="left:1px;top:642px;width:908px;height:27px;background:#ffffff"></div>
<div style="left:1px;top:642px;width:37px;height:27px;background:#006a60;line-height:27px;padding-top:1px;text-align:center;color:#fff">葡超</div>
<div style="left:39px;top:642px;width:75px;height:27px;line-height:27px;padding-top:1px;text-align:center;color:#333">25-11-30</div>
<div style="left:115px;top:642px;width:89px;height:27px;line-height:27px;padding-top:1px;text-align:center;color:#008000">吉尔维森特</div>
<div style="left:205px;top:642px;width:86px;height:27px;line-height:27px;padding-top:1px;text-align:center;color:#333"><span style="color:#ff0000">0-1</span>(0-1)</div>
<div style="left:292px;top:642px;width:39px;height:27px;line-height:27px;padding-top:1px;text-align:center;color:#333">12-3</div>
<div style="left:332px;top:642px;width:101px;height:27px;line-height:27px;padding-top:1px;text-align:center;color:#000">托德拉</div>
<div style="left:434px;top:642px;width:43px;height:27px;background:#fdf9f6;line-height:27px;padding-top:1px;text-align:center;color:#333">0.89</div>
<div style="left:478px;top:642px;width:61px;height:27px;background:#fdf9f6;line-height:27px;padding-top:1px;text-align:center;color:#000">半<b class="sl">/</b>一</div>
<div style="left:540px;top:642px;width:45px;height:27px;background:#fdf9f6;line-height:27px;padding-top:1px;text-align:center;color:#333">0.99</div>
<div style="left:586px;top:642px;width:61px;height:27px;background:#eff7fc;line-height:27px;padding-top:1px;text-align:center;color:#333">1.65</div>
<div style="left:648px;top:642px;width:62px;height:27px;background:#eff7fc;line-height:27px;padding-top:1px;text-align:center;color:#333">3.61</div>
<div style="left:711px;top:642px;width:63px;height:27px;background:#eff7fc;line-height:27px;padding-top:1px;text-align:center;color:#333">5.35</div>
<div style="left:775px;top:642px;width:38px;height:27px;line-height:27px;padding-top:1px;text-align:center;color:#008000">負</div>
<div style="left:814px;top:642px;width:38px;height:27px;line-height:27px;padding-top:1px;text-align:center;color:#008000">輸</div>
<div style="left:853px;top:642px;width:56px;height:27px;line-height:27px;padding-top:1px;text-align:center;color:#008000">小</div>
<div style="left:1px;top:670px;width:908px;height:27px;background:#efefef"></div>
<div style="left:1px;top:670px;width:37px;height:27px;background:#006a60;line-height:27px;padding-top:1px;text-align:center;color:#fff">葡超</div>
<div style="left:39px;top:670px;width:75px;height:27px;line-height:27px;padding-top:1px;text-align:center;color:#333">25-11-09</div>
<div style="left:115px;top:670px;width:89px;height:27px;line-height:27px;padding-top:1px;text-align:center;color:#000">AVS俱乐部</div>
<div style="left:205px;top:670px;width:86px;height:27px;line-height:27px;padding-top:1px;text-align:center;color:#333"><span style="color:#ff0000">1-1</span>(0-1)</div>
<div style="left:292px;top:670px;width:39px;height:27px;line-height:27px;padding-top:1px;text-align:center;color:#333">1-4</div>
<div style="left:332px;top:670px;width:101px;height:27px;line-height:27px;padding-top:1px;text-align:center;color:#008000">吉尔维森特</div>
<div style="left:434px;top:670px;width:43px;height:27px;background:#fdf9f6;line-height:27px;padding-top:1px;text-align:center;color:#333">0.98</div>
<div style="left:478px;top:670px;width:61px;height:27px;background:#fdf9f6;line-height:27px;padding-top:1px;text-align:center;color:#000"><span style="color:#ff0000">*</span>半<b class="sl">/</b>一</div>
<div style="left:540px;top:670px;width:45px;height:27px;background:#fdf9f6;line-height:27px;padding-top:1px;text-align:center;color:#333">0.90</div>
<div style="left:586px;top:670px;width:61px;height:27px;background:#eff7fc;line-height:27px;padding-top:1px;text-align:center;color:#333">5.63</div>
<div style="left:648px;top:670px;width:62px;height:27px;background:#eff7fc;line-height:27px;padding-top:1px;text-align:center;color:#333">3.60</div>
<div style="left:711px;top:670px;width:63px;height:27px;background:#eff7fc;line-height:27px;padding-top:1px;text-align:center;color:#333">1.63</div>
<div style="left:775px;top:670px;width:38px;height:27px;line-height:27px;padding-top:1px;text-align:center;color:#0000ff">平</div>
<div style="left:814px;top:670px;width:38px;height:27px;line-height:27px;padding-top:1px;text-align:center;color:#008000">輸</div>
<div style="left:853px;top:670px;width:56px;height:27px;line-height:27px;padding-top:1px;text-align:center;color:#0000ff">走</div>
<div style="left:1px;top:698px;width:908px;height:27px;background:#ffffff"></div>
<div style="left:1px;top:698px;width:37px;height:27px;background:#006a60;line-height:27px;padding-top:1px;text-align:center;color:#fff">葡超</div>
<div style="left:39px;top:698px;width:75px;height:27px;line-height:27px;padding-top:1px;text-align:center;color:#333">25-11-04</div>
<div style="left:115px;top:698px;width:89px;height:27px;line-height:27px;padding-top:1px;text-align:center;color:#008000">吉尔维森特</div>
<div style="left:205px;top:698px;width:86px;height:27px;line-height:27px;padding-top:1px;text-align:center;color:#333"><span style="color:#ff0000">1-0</span>(1-0)</div>
<div style="left:292px;top:698px;width:39px;height:27px;line-height:27px;padding-top:1px;text-align:center;color:#333">2-0</div>
<div style="left:332px;top:698px;width:101px;height:27px;line-height:27px;padding-top:1px;text-align:center;color:#000">圣塔克莱拉</div>
<div style="left:434px;top:698px;width:43px;height:27px;background:#fdf9f6;line-height:27px;padding-top:1px;text-align:center;color:#333">1.03</div>
<div style="left:478px;top:698px;width:61px;height:27px;background:#fdf9f6;line-height:27px;padding-top:1px;text-align:center;color:#000">半球</div>
<div style="left:540px;top:698px;width:45px;height:27px;background:#fdf9f6;line-height:27px;padding-top:1px;text-align:center;color:#333">0.85</div>
<div style="left:586px;top:698px;width:61px;height:27px;background:#eff7fc;line-height:27px;padding-top:1px;text-align:center;color:#333">2.05</div>
<div style="left:648px;top:698px;width:62px;height:27px;background:#eff7fc;line-height:27px;padding-top:1px;text-align:center;color:#333">2.98</div>
<div style="left:711px;top:698px;width:63px;height:27px;background:#eff7fc;line-height:27px;padding-top:1px;text-align:center;color:#333">4.11</div>
<div style="left:775px;top:698px;width:38px;height:27px;line-height:27px;padding-top:1px;text-align:center;color:#ff0000">勝</div>
<div style="left:814px;top:698px;width:38px;height:27px;line-height:27px;padding-top:1px;text-align:center;color:#ff0000">贏</div>
<div style="left:853px;top:698px;width:56px;height:27px;line-height:27px;padding-top:1px;text-align:center;color:#008000">小</div>
<div style="left:1px;top:726px;width:908px;height:27px;background:#efefef"></div>
<div style="left:1px;top:726px;width:37px;height:27px;background:#006a60;line-height:27px;padding-top:1px;text-align:center;color:#fff">葡超</div>
<div style="left:39px;top:726px;width:75px;height:27px;line-height:27px;padding-top:1px;text-align:center;color:#333">25-10-25</div>
<div style="left:115px;top:726px;width:89px;height:27px;line-height:27px;padding-top:1px;text-align:center;color:#000">艾华卡</div>
<div style="left:205px;top:726px;width:86px;height:27px;line-height:27px;padding-top:1px;text-align:center;color:#333"><span style="color:#ff0000">0-4</span>(0-2)</div>
<div style="left:292px;top:726px;width:39px;height:27px;line-height:27px;padding-top:1px;text-align:center;color:#333">1-4</div>
<div style="left:332px;top:726px;width:101px;height:27px;line-height:27px;padding-top:1px;text-align:center;color:#008000"><span style="position:relative;left:-1px">吉尔维森特<b class="one">1</b></span></div>
<div style="left:434px;top:726px;width:43px;height:27px;background:#fdf9f6;line-height:27px;padding-top:1px;text-align:center;color:#333">0.85</div>
<div style="left:478px;top:726px;width:61px;height:27px;background:#fdf9f6;line-height:27px;padding-top:1px;text-align:center;color:#000"><span style="color:#ff0000">*</span>平<b class="sl">/</b>半</div>
<div style="left:540px;top:726px;width:45px;height:27px;background:#fdf9f6;line-height:27px;padding-top:1px;text-align:center;color:#333">1.03</div>
<div style="left:586px;top:726px;width:61px;height:27px;background:#eff7fc;line-height:27px;padding-top:1px;text-align:center;color:#333">3.13</div>
<div style="left:648px;top:726px;width:62px;height:27px;background:#eff7fc;line-height:27px;padding-top:1px;text-align:center;color:#333">3.02</div>
<div style="left:711px;top:726px;width:63px;height:27px;background:#eff7fc;line-height:27px;padding-top:1px;text-align:center;color:#333">2.38</div>
<div style="left:775px;top:726px;width:38px;height:27px;line-height:27px;padding-top:1px;text-align:center;color:#ff0000">勝</div>
<div style="left:814px;top:726px;width:38px;height:27px;line-height:27px;padding-top:1px;text-align:center;color:#ff0000">贏</div>
<div style="left:853px;top:726px;width:56px;height:27px;line-height:27px;padding-top:1px;text-align:center;color:#ff0000">大</div>
<div style="left:0px;top:432px;width:909px;height:1px;background:#bfbfbf"></div>
<div style="left:433px;top:455px;width:476px;height:1px;background:#bfbfbf"></div>
<div style="left:0px;top:473px;width:909px;height:1px;background:#bfbfbf"></div>
<div style="left:0px;top:501px;width:909px;height:1px;background:#bfbfbf"></div>
<div style="left:0px;top:529px;width:909px;height:1px;background:#bfbfbf"></div>
<div style="left:0px;top:557px;width:909px;height:1px;background:#bfbfbf"></div>
<div style="left:0px;top:585px;width:909px;height:1px;background:#bfbfbf"></div>
<div style="left:0px;top:613px;width:909px;height:1px;background:#bfbfbf"></div>
<div style="left:0px;top:641px;width:909px;height:1px;background:#bfbfbf"></div>
<div style="left:0px;top:669px;width:909px;height:1px;background:#bfbfbf"></div>
<div style="left:0px;top:697px;width:909px;height:1px;background:#bfbfbf"></div>
<div style="left:0px;top:725px;width:909px;height:1px;background:#bfbfbf"></div>
<div style="left:0px;top:753px;width:909px;height:1px;background:#bfbfbf"></div>
<div style="left:0px;top:432px;width:1px;height:321px;background:#bfbfbf"></div>
<div style="left:38px;top:432px;width:1px;height:321px;background:#bfbfbf"></div>
<div style="left:114px;top:432px;width:1px;height:321px;background:#bfbfbf"></div>
<div style="left:204px;top:432px;width:1px;height:321px;background:#bfbfbf"></div>
<div style="left:291px;top:432px;width:1px;height:321px;background:#bfbfbf"></div>
<div style="left:331px;top:432px;width:1px;height:321px;background:#bfbfbf"></div>
<div style="left:433px;top:432px;width:1px;height:321px;background:#bfbfbf"></div>
<div style="left:477px;top:455px;width:1px;height:298px;background:#bfbfbf"></div>
<div style="left:539px;top:455px;width:1px;height:298px;background:#bfbfbf"></div>
<div style="left:585px;top:432px;width:1px;height:321px;background:#bfbfbf"></div>
<div style="left:647px;top:455px;width:1px;height:298px;background:#bfbfbf"></div>
<div style="left:710px;top:455px;width:1px;height:298px;background:#bfbfbf"></div>
<div style="left:774px;top:432px;width:1px;height:321px;background:#bfbfbf"></div>
<div style="left:813px;top:455px;width:1px;height:298px;background:#bfbfbf"></div>
<div style="left:852px;top:455px;width:1px;height:298px;background:#bfbfbf"></div>
<div class="t" style="left:281px;top:41px;line-height:14px;color:#000;">近</div>
<div class="sel" style="left:297px;top:39px;width:36px;height:16px;line-height:14px;padding-top:1px;font-size:11px">10<i class="arr"></i></div>
<div class="t" style="left:337px;top:41px;line-height:14px;color:#000;">场</div>
<div class="cb" style="left:353px;top:42px"></div>
<div class="t" style="left:370px;top:41px;line-height:14px;color:#000;">同主</div>
<div class="cb" style="left:394px;top:42px"><svg width="11" height="11" viewBox="0 0 11 11"><path d="M2 5.5 L4.3 8.3 L9 2.3" stroke="#3c3c3c" stroke-width="2.2" fill="none"/></svg></div>
<div class="t" style="left:406.5px;top:41px;line-height:14px;color:#000;">欧罗巴杯</div>
<div class="cb" style="left:456px;top:42px"><svg width="11" height="11" viewBox="0 0 11 11"><path d="M2 5.5 L4.3 8.3 L9 2.3" stroke="#3c3c3c" stroke-width="2.2" fill="none"/></svg></div>
<div class="t" style="left:468.5px;top:41px;line-height:14px;color:#000;">葡超</div>
<div class="cb" style="left:493px;top:42px"><svg width="11" height="11" viewBox="0 0 11 11"><path d="M2 5.5 L4.3 8.3 L9 2.3" stroke="#3c3c3c" stroke-width="2.2" fill="none"/></svg></div>
<div class="t" style="left:505.5px;top:41px;line-height:14px;color:#000;">葡杯</div>
<div class="cb" style="left:530px;top:42px"><svg width="11" height="11" viewBox="0 0 11 11"><path d="M2 5.5 L4.3 8.3 L9 2.3" stroke="#3c3c3c" stroke-width="2.2" fill="none"/></svg></div>
<div class="t" style="left:542.5px;top:41px;line-height:14px;color:#000;">葡联杯</div>
<div class="cb" style="left:579px;top:42px"><svg width="11" height="11" viewBox="0 0 11 11"><path d="M2 5.5 L4.3 8.3 L9 2.3" stroke="#3c3c3c" stroke-width="2.2" fill="none"/></svg></div>
<div class="t" style="left:591.5px;top:41px;line-height:14px;color:#000;">球会友谊</div>
<div class="cb" style="left:640px;top:42px"><svg width="11" height="11" viewBox="0 0 11 11"><path d="M2 5.5 L4.3 8.3 L9 2.3" stroke="#3c3c3c" stroke-width="2.2" fill="none"/></svg></div>
<div class="t" style="left:652.5px;top:41px;line-height:14px;color:#000;">世俱杯</div>
<div class="t" style="left:371px;top:416px;line-height:14px;color:#000;">近</div>
<div class="sel" style="left:387px;top:414px;width:36px;height:16px;line-height:14px;padding-top:1px;font-size:11px">10<i class="arr"></i></div>
<div class="t" style="left:427px;top:416px;line-height:14px;color:#000;">场</div>
<div class="cb" style="left:443px;top:417px"></div>
<div class="t" style="left:460px;top:416px;line-height:14px;color:#000;">同客</div>
<div class="cb" style="left:488px;top:417px"><svg width="11" height="11" viewBox="0 0 11 11"><path d="M2 5.5 L4.3 8.3 L9 2.3" stroke="#3c3c3c" stroke-width="2.2" fill="none"/></svg></div>
<div class="t" style="left:500.5px;top:416px;line-height:14px;color:#000;">葡超</div>
<div class="cb" style="left:525px;top:417px"><svg width="11" height="11" viewBox="0 0 11 11"><path d="M2 5.5 L4.3 8.3 L9 2.3" stroke="#3c3c3c" stroke-width="2.2" fill="none"/></svg></div>
<div class="t" style="left:537.5px;top:416px;line-height:14px;color:#000;">葡杯</div>
<div class="cb" style="left:562px;top:417px"><svg width="11" height="11" viewBox="0 0 11 11"><path d="M2 5.5 L4.3 8.3 L9 2.3" stroke="#3c3c3c" stroke-width="2.2" fill="none"/></svg></div>
<div class="t" style="left:574.5px;top:416px;line-height:14px;color:#000;">球会友谊</div>
<div class="sel" style="left:498px;top:59px;width:59px;height:20px;line-height:18px;padding-top:1px;font-size:12px">Crow*<i class="arr"></i></div>
<div class="sel" style="left:565px;top:59px;width:35px;height:20px;line-height:18px;padding-top:1px;font-size:12px">终<i class="arr"></i></div>
<div class="sel" style="left:640px;top:59px;width:84px;height:20px;line-height:18px;padding-top:1px;font-size:12px">胜平负均值<i class="arr"></i></div>
<div class="sel" style="left:732px;top:59px;width:35px;height:20px;line-height:18px;padding-top:1px;font-size:12px">终<i class="arr"></i></div>
<div class="sel" style="left:825px;top:59px;width:47px;height:20px;line-height:18px;padding-top:1px;font-size:12px">全场<i class="arr"></i></div>
<div class="sel" style="left:458px;top:434px;width:59px;height:20px;line-height:18px;padding-top:1px;font-size:12px">Crow*<i class="arr"></i></div>
<div class="sel" style="left:525px;top:434px;width:35px;height:20px;line-height:18px;padding-top:1px;font-size:12px">终<i class="arr"></i></div>
<div class="sel" style="left:616px;top:434px;width:83px;height:20px;line-height:18px;padding-top:1px;font-size:12px">胜平负均值<i class="arr"></i></div>
<div class="sel" style="left:708px;top:434px;width:36px;height:20px;line-height:18px;padding-top:1px;font-size:12px">终<i class="arr"></i></div>
<div class="sel" style="left:818px;top:434px;width:48px;height:20px;line-height:18px;padding-top:1px;font-size:12px">全场<i class="arr"></i></div>
</body></html>
